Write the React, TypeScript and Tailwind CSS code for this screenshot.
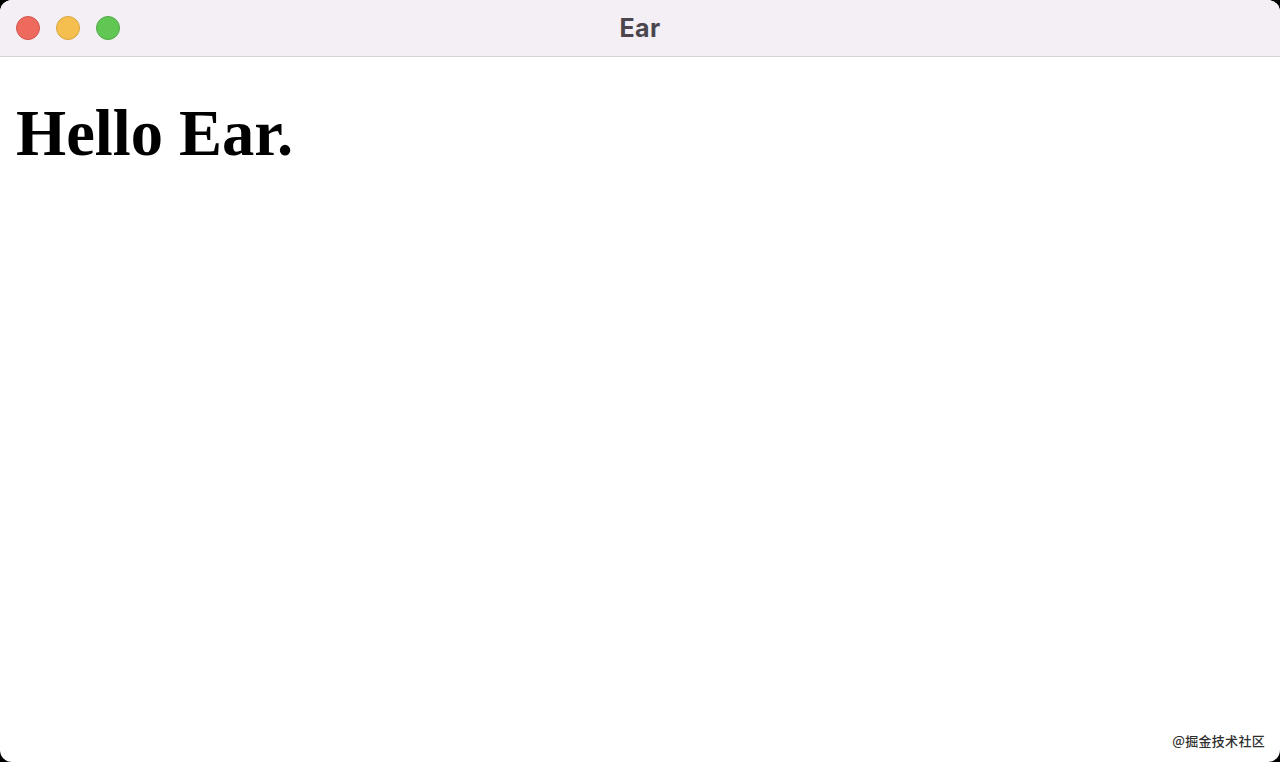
export default function App() {
  return (
    <div className="w-[1280px] h-[762px] bg-black overflow-hidden">
      <div className="relative w-full h-full bg-white rounded-[12px] overflow-hidden flex flex-col">
        <div className="h-[57px] shrink-0 bg-[#f3eff4] border-b border-[#d6d4d7] flex items-center relative">
          <div className="flex items-center gap-[16px] pl-[16px]">
            <div className="w-[24px] h-[24px] rounded-full bg-[#ee6a5f] border border-[#d2574d]" />
            <div className="w-[24px] h-[24px] rounded-full bg-[#f5bf4f] border border-[#d9a43f]" />
            <div className="w-[24px] h-[24px] rounded-full bg-[#62c655] border border-[#4fab44]" />
          </div>
          <div className="absolute inset-0 flex items-center justify-center pointer-events-none">
            <span className="font-['Inter',sans-serif] font-bold text-[25px] tracking-[0.3px] text-[#4b464d] leading-none">Ear</span>
          </div>
        </div>
        <div className="flex-1 px-[16px]">
          <h1 className="mt-[44px] font-['Liberation_Serif','Times_New_Roman',serif] font-bold text-[64.5px] leading-[65px] text-black">
            Hello Ear.
          </h1>
        </div>
        <div className="absolute right-[15px] bottom-[15px] font-['Noto_Sans_CJK_SC',sans-serif] font-medium text-[13px] tracking-[0.3px] leading-none text-[#2e2e2e] [text-shadow:0_0_2px_#fff,0_0_1px_#fff]">
          @掘金技术社区
        </div>
      </div>
    </div>
  );
}
